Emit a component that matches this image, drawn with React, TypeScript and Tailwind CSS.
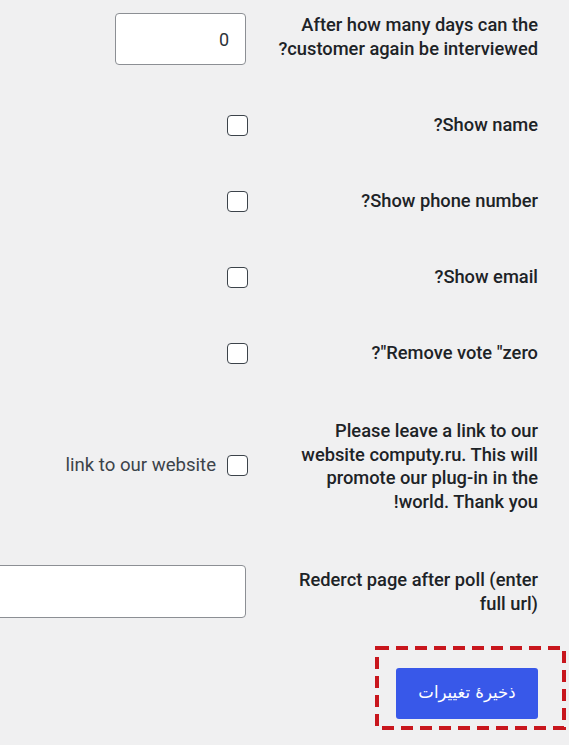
import React from 'react';

const labelCls =
  "w-[266px] shrink-0 text-right text-[18.3px] leading-[23.5px] font-medium text-[#1d2327]";

function CheckRow({ label }: { label: string }) {
  return (
    <div className="flex items-center h-[76px] gap-[24px]">
      <div className={labelCls}>{label}</div>
      <span className="w-[21px] h-[21px] rounded-[4px] border border-[#3c434a] bg-white shrink-0" />
    </div>
  );
}

export default function App() {
  return (
    <div
      dir="rtl"
      className="min-h-[745px] w-full overflow-hidden bg-[#f0f0f1] font-['Roboto','Liberation_Sans',sans-serif]"
    >
      <div className="pr-[31px] pt-[13px]">
        <div className="flex items-start gap-[26px]">
          <div className={labelCls}>
            After how many days can the customer again be interviewed?
          </div>
          <div className="w-[131px] h-[52px] rounded-[4px] border border-[#8c8f94] bg-white flex items-center pr-[16px] text-[18px] text-[#2c3338] shrink-0">
            0
          </div>
        </div>

        <div className="mt-[22px]">
          <CheckRow label="Show name?" />
          <CheckRow label="Show phone number?" />
          <CheckRow label="Show email?" />
          <CheckRow label={'Remove vote "zero"?'} />
        </div>

        <div className="mt-[28px] flex items-center gap-[24px]">
          <div className={labelCls}>
            Please leave a link to our website computy.ru. This will promote our plug-in in the world. Thank you!
          </div>
          <div className="flex items-center gap-[11px] shrink-0">
            <span className="w-[21px] h-[21px] rounded-[4px] border border-[#3c434a] bg-white shrink-0" />
            <span className="text-[18.6px] text-[#3c434a] whitespace-nowrap">link to our website</span>
          </div>
        </div>

        <div className="mt-[55px] flex items-start gap-[26px]">
          <div className={labelCls}>Rederct page after poll (enter full url)</div>
          <div className="-mt-[3px] w-[400px] h-[53px] rounded-[4px] border border-[#8c8f94] bg-white shrink-0" />
        </div>
      </div>

      <div className="mt-[28px] pr-[3px] flex">
        <div className="relative pt-[22px] pr-[28px] pb-[11px] pl-[21px]">
          <svg className="absolute inset-0 w-full h-full" aria-hidden="true">
            <rect
              x="2"
              y="2"
              width="calc(100% - 4px)"
              height="calc(100% - 4px)"
              fill="none"
              stroke="#c8161d"
              strokeWidth="4"
              strokeDasharray="12 7"
            />
          </svg>
          <button className="relative w-[142px] h-[51px] rounded-[3px] bg-[#3858e9] text-white text-[16.5px] font-['DejaVu_Sans','Noto_Sans',sans-serif]">
            ذخیرهٔ تغییرات
          </button>
        </div>
      </div>
    </div>
  );
}
